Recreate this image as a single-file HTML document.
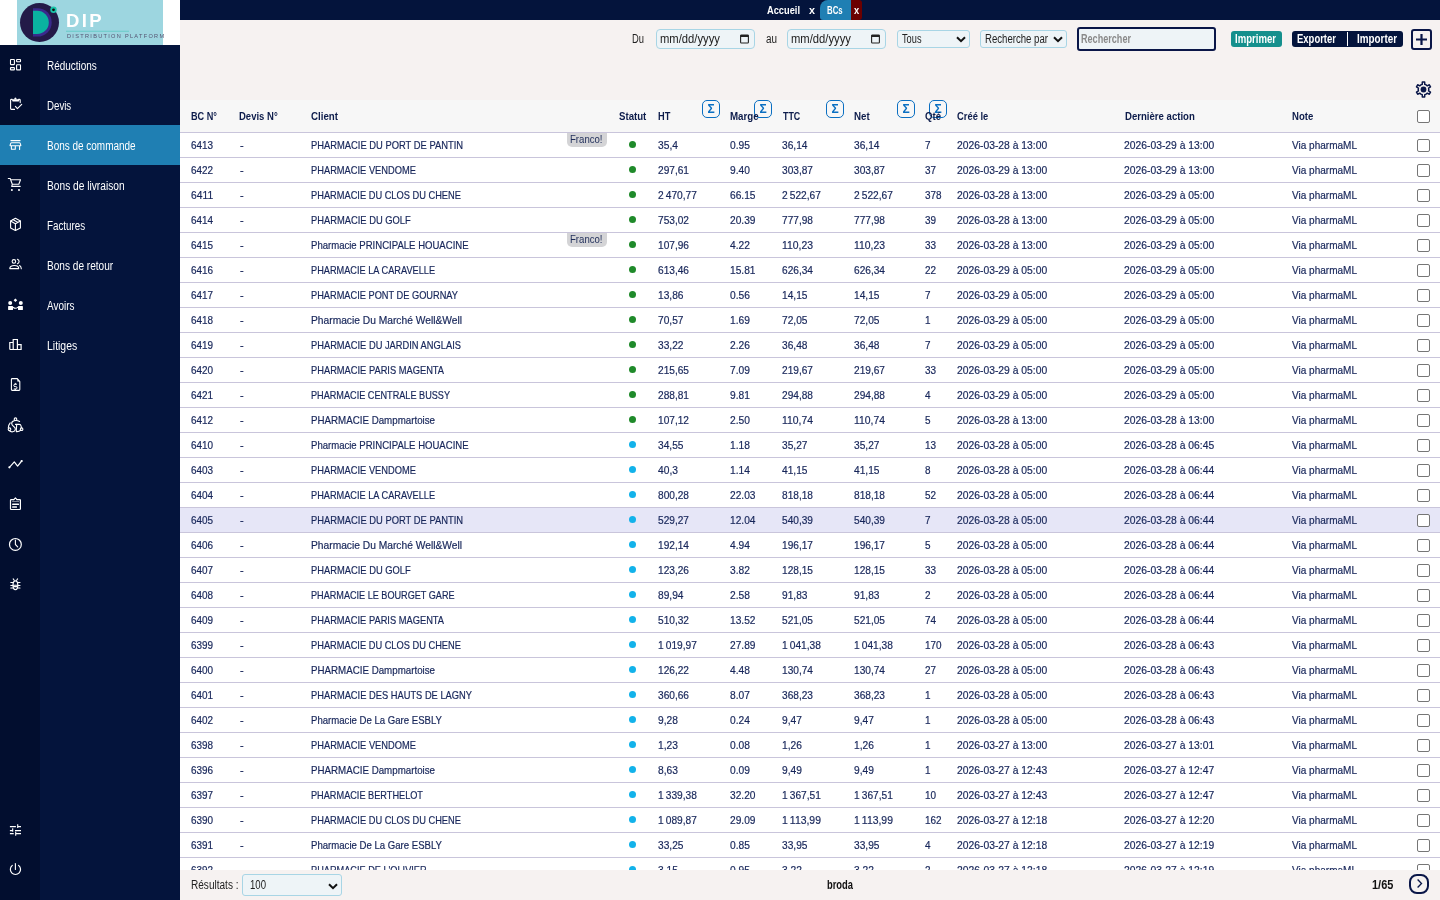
<!DOCTYPE html><html><head><meta charset="utf-8"><style>
*{box-sizing:border-box;margin:0;padding:0}
html,body{width:1440px;height:900px;overflow:hidden;background:#f6f2f1;font-family:"Liberation Sans",sans-serif;}
#wrap{position:absolute;left:0;top:0;width:1440px;height:900px;overflow:hidden;will-change:transform;background:#f6f2f1}
.t{display:inline-block;transform-origin:0 50%;white-space:nowrap}
#side{position:absolute;left:0;top:0;width:180px;height:900px;background:#04143c;}
#side .icol{position:absolute;left:0;top:45px;width:40px;height:855px;background:#020e2f}
#logo{position:absolute;left:0;top:0;width:180px;height:45px;background:#fff}
#logo .bx{position:absolute;left:17px;top:0;width:146px;height:45px;background:#9dd6e0}
.si{position:absolute;left:0;width:180px;height:40px}
.si.act{background:#1f7fb3}
.si .ic{position:absolute;left:0;top:0;width:32px;height:40px;display:flex;align-items:center;justify-content:center}
.si .ic svg{display:block}
.si .lb{position:absolute;left:47px;top:1px;line-height:40px;font-size:12px;color:#fff}
#top{position:absolute;left:180px;top:0;width:1260px;height:20px;background:#04143c}
.tab{position:absolute;top:0;height:20px;line-height:20px;font-size:11px;font-weight:bold;color:#fff}
#main{position:absolute;left:180px;top:20px;width:1260px;height:850px;background:#f6f2f1}
.lbl{position:absolute;font-size:12px;color:#222;line-height:20px}
.date{position:absolute;top:29px;height:20px;width:99px;border:1px solid #a8d5e5;border-radius:4px;background:#eef4f7;font-size:12px;color:#222;line-height:18px;padding-left:4px}
.sel{position:absolute;top:30px;height:18px;border:1px solid #a8d5e5;border-radius:3px;background:#eef4f7;font-size:12px;color:#222;line-height:17px;padding-left:4px}
.btn{position:absolute;top:31px;height:16px;border-radius:3px;color:#fff;font-size:12px;font-weight:bold;line-height:16px}
#thead{position:absolute;left:180px;top:100px;width:1260px;height:33px;background:#f7f7f7;border-bottom:1px solid #c9c5db}
.h{position:absolute;top:0;line-height:33px;font-size:11px;font-weight:bold;color:#0d1c4b}
.sig{position:absolute;top:0;width:18px;height:18px;border:1px solid #0a6fc2;border-radius:5px;color:#0a6fc2;font-size:12px;font-weight:bold;text-align:center;line-height:17px}
#tbody{position:absolute;left:180px;top:133px;width:1260px;height:737px;overflow:hidden}
.row{position:absolute;left:0;width:1260px;height:25px;background:#fff;border-bottom:1px solid #c9c5db}
.row.hl{background:#e6e6f7}
.row .c{position:absolute;top:0;line-height:24px;font-size:11px;color:#17265a;white-space:nowrap;-webkit-text-stroke:0.2px #17265a}
.franco{position:absolute;left:387px;top:0;width:40px;height:14px;background:#d4d4d6;border-radius:0 0 5px 5px;font-size:11px;line-height:13px;color:#1e2c59;padding-left:3px}
.dot{position:absolute;left:448.5px;top:7.5px;width:7.5px;height:7.5px;border-radius:50%}
.dot.g{background:#1f8a2a}.dot.b{background:#12b2ea}
.cb{position:absolute;left:1237px;top:6px;width:13px;height:13px;border:1px solid #767676;border-radius:2px;background:#fff}
#foot{position:absolute;left:180px;top:870px;width:1260px;height:30px;background:#f6f2f1}
</style></head><body><div id="wrap">
<div id="main"></div>

<div class="lbl" style="left:632px;top:29px"><span class="t" style="transform:scaleX(0.782);">Du</span></div>
<div class="date" style="left:656px"><span style="margin-left:-1px"><span class="t" style="transform:scaleX(0.937);">mm/dd/yyyy</span></span><svg style="position:absolute;left:83px;top:4px" width="10" height="10" viewBox="0 0 10 10"><rect x="0.6" y="1" width="7.8" height="8" rx="0.8" fill="none" stroke="#222" stroke-width="1.1"/><rect x="0.6" y="1" width="7.8" height="2" fill="#222"/></svg></div>
<div class="lbl" style="left:765.5px;top:29px"><span class="t" style="transform:scaleX(0.824);">au</span></div>
<div class="date" style="left:787px"><span style="margin-left:-1px"><span class="t" style="transform:scaleX(0.937);">mm/dd/yyyy</span></span><svg style="position:absolute;left:83px;top:4px" width="10" height="10" viewBox="0 0 10 10"><rect x="0.6" y="1" width="7.8" height="8" rx="0.8" fill="none" stroke="#222" stroke-width="1.1"/><rect x="0.6" y="1" width="7.8" height="2" fill="#222"/></svg></div>
<div class="sel" style="left:897px;width:73px"><span class="t" style="transform:scaleX(0.769);">Tous</span><svg style="position:absolute;left:58px;top:5px" width="10" height="7" viewBox="0 0 10 7"><path d="M1 1.2l4 4 4-4" fill="none" stroke="#111" stroke-width="2"/></svg></div>
<div class="sel" style="left:980px;width:87px"><span class="t" style="transform:scaleX(0.800);">Recherche par</span><svg style="position:absolute;left:72px;top:5px" width="10" height="7" viewBox="0 0 10 7"><path d="M1 1.2l4 4 4-4" fill="none" stroke="#111" stroke-width="2"/></svg></div>
<div style="position:absolute;left:1077px;top:27px;width:139px;height:24px;border:2px solid #0a1648;border-radius:3px;background:#eef4f7;font-size:12px;color:#8a8a8a;line-height:20px;padding-left:2px;font-weight:bold"><span class="t" style="transform:scaleX(0.757);">Rechercher</span></div>
<div class="btn" style="left:1231px;width:51px;background:#15908d;padding-left:4px"><span class="t" style="transform:scaleX(0.798);">Imprimer</span></div>
<div class="btn" style="left:1292px;width:111px;background:#04143c">
  <div style="position:absolute;left:5px;top:0"><span class="t" style="transform:scaleX(0.790);">Exporter</span></div>
  <div style="position:absolute;left:55px;top:1px;width:1px;height:14px;background:#fff"></div>
  <div style="position:absolute;left:65px;top:0"><span class="t" style="transform:scaleX(0.822);">Importer</span></div>
</div>
<div style="position:absolute;left:1411px;top:29px;width:21px;height:21px;border:2px solid #0a1648;border-radius:3px;background:#f6f2f1"><svg style="position:absolute;left:1px;top:1px" width="15" height="15" viewBox="0 0 15 15"><path d="M7.5 2v11M2 7.5h11" stroke="#0a1648" stroke-width="2.2"/></svg></div>
<svg style="position:absolute;left:1415px;top:81px" width="17" height="17" viewBox="0 0 17 17"><path d="M5.85 3.91 L7.22 3.36 L7.33 1.09 L9.67 1.09 L9.78 3.36 L11.15 3.91 L12.31 4.82 L14.33 3.78 L15.50 5.81 L13.59 7.04 L13.80 8.50 L13.59 9.96 L15.50 11.19 L14.33 13.22 L12.31 12.18 L11.15 13.09 L9.78 13.64 L9.67 15.91 L7.33 15.91 L7.22 13.64 L5.85 13.09 L4.69 12.18 L2.67 13.22 L1.50 11.19 L3.41 9.96 L3.20 8.50 L3.41 7.04 L1.50 5.81 L2.67 3.78 L4.69 4.82Z" fill="none" stroke="#0a1648" stroke-width="1.5" stroke-linejoin="round"/><circle cx="8.5" cy="8.5" r="2.9" fill="#0a1648"/></svg>

<div id="thead"><div class="sig" style="left:522px">Σ</div><div class="sig" style="left:574px">Σ</div><div class="sig" style="left:646px">Σ</div><div class="sig" style="left:717px">Σ</div><div class="sig" style="left:749px">Σ</div><div class="h" style="left:11px"><span class="t" style="transform:scaleX(0.831);">BC N°</span></div><div class="h" style="left:59px"><span class="t" style="transform:scaleX(0.865);">Devis N°</span></div><div class="h" style="left:131px"><span class="t" style="transform:scaleX(0.884);">Client</span></div><div class="h" style="left:439px"><span class="t" style="transform:scaleX(0.876);">Statut</span></div><div class="h" style="left:478px"><span class="t" style="transform:scaleX(0.839);">HT</span></div><div class="h" style="left:550px"><span class="t" style="transform:scaleX(0.886);">Marge</span></div><div class="h" style="left:603px"><span class="t" style="transform:scaleX(0.809);">TTC</span></div><div class="h" style="left:674px"><span class="t" style="transform:scaleX(0.886);">Net</span></div><div class="h" style="left:745px"><span class="t" style="transform:scaleX(0.873);">Qté</span></div><div class="h" style="left:777px"><span class="t" style="transform:scaleX(0.853);">Créé le</span></div><div class="h" style="left:944.5px"><span class="t" style="transform:scaleX(0.872);">Dernière action</span></div><div class="h" style="left:1112px"><span class="t" style="transform:scaleX(0.871);">Note</span></div><div class="cb" style="left:1237px;top:10px"></div></div>
<div id="tbody"><div class="row" style="top:0px"><div class="c" style="left:11px"><span class="t" style="transform:scaleX(0.903);">6413</span></div><div class="c" style="left:60px">-</div><div class="c" style="left:131px"><span class="t" style="transform:scaleX(0.852);">PHARMACIE DU PORT DE PANTIN</span></div><div class="franco"><span class="t" style="transform:scaleX(0.872);">Franco!</span></div><div class="dot g"></div><div class="c" style="left:478px"><span class="t" style="transform:scaleX(0.931);">35,4</span></div><div class="c" style="left:550px"><span class="t" style="transform:scaleX(0.931);">0.95</span></div><div class="c" style="left:602px"><span class="t" style="transform:scaleX(0.925);">36,14</span></div><div class="c" style="left:674px"><span class="t" style="transform:scaleX(0.925);">36,14</span></div><div class="c" style="left:745px"><span class="t" style="transform:scaleX(0.903);">7</span></div><div class="c" style="left:777px"><span class="t" style="transform:scaleX(0.939);">2026-03-28 à 13:00</span></div><div class="c" style="left:944px"><span class="t" style="transform:scaleX(0.939);">2026-03-29 à 13:00</span></div><div class="c" style="left:1112px"><span class="t" style="transform:scaleX(0.911);">Via pharmaML</span></div><div class="cb"></div></div><div class="row" style="top:25px"><div class="c" style="left:11px"><span class="t" style="transform:scaleX(0.903);">6422</span></div><div class="c" style="left:60px">-</div><div class="c" style="left:131px"><span class="t" style="transform:scaleX(0.846);">PHARMACIE VENDOME</span></div><div class="dot g"></div><div class="c" style="left:478px"><span class="t" style="transform:scaleX(0.921);">297,61</span></div><div class="c" style="left:550px"><span class="t" style="transform:scaleX(0.931);">9.40</span></div><div class="c" style="left:602px"><span class="t" style="transform:scaleX(0.921);">303,87</span></div><div class="c" style="left:674px"><span class="t" style="transform:scaleX(0.921);">303,87</span></div><div class="c" style="left:745px"><span class="t" style="transform:scaleX(0.903);">37</span></div><div class="c" style="left:777px"><span class="t" style="transform:scaleX(0.939);">2026-03-29 à 13:00</span></div><div class="c" style="left:944px"><span class="t" style="transform:scaleX(0.939);">2026-03-29 à 13:00</span></div><div class="c" style="left:1112px"><span class="t" style="transform:scaleX(0.911);">Via pharmaML</span></div><div class="cb"></div></div><div class="row" style="top:50px"><div class="c" style="left:11px"><span class="t" style="transform:scaleX(0.934);">6411</span></div><div class="c" style="left:60px">-</div><div class="c" style="left:131px"><span class="t" style="transform:scaleX(0.843);">PHARMACIE DU CLOS DU CHENE</span></div><div class="dot g"></div><div class="c" style="left:478px"><span class="t" style="transform:scaleX(0.927);">2 470,77</span></div><div class="c" style="left:550px"><span class="t" style="transform:scaleX(0.925);">66.15</span></div><div class="c" style="left:602px"><span class="t" style="transform:scaleX(0.927);">2 522,67</span></div><div class="c" style="left:674px"><span class="t" style="transform:scaleX(0.927);">2 522,67</span></div><div class="c" style="left:745px"><span class="t" style="transform:scaleX(0.903);">378</span></div><div class="c" style="left:777px"><span class="t" style="transform:scaleX(0.939);">2026-03-28 à 13:00</span></div><div class="c" style="left:944px"><span class="t" style="transform:scaleX(0.939);">2026-03-29 à 05:00</span></div><div class="c" style="left:1112px"><span class="t" style="transform:scaleX(0.911);">Via pharmaML</span></div><div class="cb"></div></div><div class="row" style="top:75px"><div class="c" style="left:11px"><span class="t" style="transform:scaleX(0.903);">6414</span></div><div class="c" style="left:60px">-</div><div class="c" style="left:131px"><span class="t" style="transform:scaleX(0.850);">PHARMACIE DU GOLF</span></div><div class="dot g"></div><div class="c" style="left:478px"><span class="t" style="transform:scaleX(0.921);">753,02</span></div><div class="c" style="left:550px"><span class="t" style="transform:scaleX(0.925);">20.39</span></div><div class="c" style="left:602px"><span class="t" style="transform:scaleX(0.921);">777,98</span></div><div class="c" style="left:674px"><span class="t" style="transform:scaleX(0.921);">777,98</span></div><div class="c" style="left:745px"><span class="t" style="transform:scaleX(0.903);">39</span></div><div class="c" style="left:777px"><span class="t" style="transform:scaleX(0.939);">2026-03-28 à 13:00</span></div><div class="c" style="left:944px"><span class="t" style="transform:scaleX(0.939);">2026-03-29 à 05:00</span></div><div class="c" style="left:1112px"><span class="t" style="transform:scaleX(0.911);">Via pharmaML</span></div><div class="cb"></div></div><div class="row" style="top:100px"><div class="c" style="left:11px"><span class="t" style="transform:scaleX(0.903);">6415</span></div><div class="c" style="left:60px">-</div><div class="c" style="left:131px"><span class="t" style="transform:scaleX(0.869);">Pharmacie PRINCIPALE HOUACINE</span></div><div class="franco"><span class="t" style="transform:scaleX(0.872);">Franco!</span></div><div class="dot g"></div><div class="c" style="left:478px"><span class="t" style="transform:scaleX(0.921);">107,96</span></div><div class="c" style="left:550px"><span class="t" style="transform:scaleX(0.931);">4.22</span></div><div class="c" style="left:602px"><span class="t" style="transform:scaleX(0.944);">110,23</span></div><div class="c" style="left:674px"><span class="t" style="transform:scaleX(0.944);">110,23</span></div><div class="c" style="left:745px"><span class="t" style="transform:scaleX(0.903);">33</span></div><div class="c" style="left:777px"><span class="t" style="transform:scaleX(0.939);">2026-03-28 à 13:00</span></div><div class="c" style="left:944px"><span class="t" style="transform:scaleX(0.939);">2026-03-29 à 05:00</span></div><div class="c" style="left:1112px"><span class="t" style="transform:scaleX(0.911);">Via pharmaML</span></div><div class="cb"></div></div><div class="row" style="top:125px"><div class="c" style="left:11px"><span class="t" style="transform:scaleX(0.903);">6416</span></div><div class="c" style="left:60px">-</div><div class="c" style="left:131px"><span class="t" style="transform:scaleX(0.836);">PHARMACIE LA CARAVELLE</span></div><div class="dot g"></div><div class="c" style="left:478px"><span class="t" style="transform:scaleX(0.921);">613,46</span></div><div class="c" style="left:550px"><span class="t" style="transform:scaleX(0.925);">15.81</span></div><div class="c" style="left:602px"><span class="t" style="transform:scaleX(0.921);">626,34</span></div><div class="c" style="left:674px"><span class="t" style="transform:scaleX(0.921);">626,34</span></div><div class="c" style="left:745px"><span class="t" style="transform:scaleX(0.903);">22</span></div><div class="c" style="left:777px"><span class="t" style="transform:scaleX(0.939);">2026-03-29 à 05:00</span></div><div class="c" style="left:944px"><span class="t" style="transform:scaleX(0.939);">2026-03-29 à 05:00</span></div><div class="c" style="left:1112px"><span class="t" style="transform:scaleX(0.911);">Via pharmaML</span></div><div class="cb"></div></div><div class="row" style="top:150px"><div class="c" style="left:11px"><span class="t" style="transform:scaleX(0.903);">6417</span></div><div class="c" style="left:60px">-</div><div class="c" style="left:131px"><span class="t" style="transform:scaleX(0.840);">PHARMACIE PONT DE GOURNAY</span></div><div class="dot g"></div><div class="c" style="left:478px"><span class="t" style="transform:scaleX(0.925);">13,86</span></div><div class="c" style="left:550px"><span class="t" style="transform:scaleX(0.931);">0.56</span></div><div class="c" style="left:602px"><span class="t" style="transform:scaleX(0.925);">14,15</span></div><div class="c" style="left:674px"><span class="t" style="transform:scaleX(0.925);">14,15</span></div><div class="c" style="left:745px"><span class="t" style="transform:scaleX(0.903);">7</span></div><div class="c" style="left:777px"><span class="t" style="transform:scaleX(0.939);">2026-03-29 à 05:00</span></div><div class="c" style="left:944px"><span class="t" style="transform:scaleX(0.939);">2026-03-29 à 05:00</span></div><div class="c" style="left:1112px"><span class="t" style="transform:scaleX(0.911);">Via pharmaML</span></div><div class="cb"></div></div><div class="row" style="top:175px"><div class="c" style="left:11px"><span class="t" style="transform:scaleX(0.903);">6418</span></div><div class="c" style="left:60px">-</div><div class="c" style="left:131px"><span class="t" style="transform:scaleX(0.931);">Pharmacie Du Marché Well&amp;Well</span></div><div class="dot g"></div><div class="c" style="left:478px"><span class="t" style="transform:scaleX(0.925);">70,57</span></div><div class="c" style="left:550px"><span class="t" style="transform:scaleX(0.931);">1.69</span></div><div class="c" style="left:602px"><span class="t" style="transform:scaleX(0.925);">72,05</span></div><div class="c" style="left:674px"><span class="t" style="transform:scaleX(0.925);">72,05</span></div><div class="c" style="left:745px"><span class="t" style="transform:scaleX(0.903);">1</span></div><div class="c" style="left:777px"><span class="t" style="transform:scaleX(0.939);">2026-03-29 à 05:00</span></div><div class="c" style="left:944px"><span class="t" style="transform:scaleX(0.939);">2026-03-29 à 05:00</span></div><div class="c" style="left:1112px"><span class="t" style="transform:scaleX(0.911);">Via pharmaML</span></div><div class="cb"></div></div><div class="row" style="top:200px"><div class="c" style="left:11px"><span class="t" style="transform:scaleX(0.903);">6419</span></div><div class="c" style="left:60px">-</div><div class="c" style="left:131px"><span class="t" style="transform:scaleX(0.846);">PHARMACIE DU JARDIN ANGLAIS</span></div><div class="dot g"></div><div class="c" style="left:478px"><span class="t" style="transform:scaleX(0.925);">33,22</span></div><div class="c" style="left:550px"><span class="t" style="transform:scaleX(0.931);">2.26</span></div><div class="c" style="left:602px"><span class="t" style="transform:scaleX(0.925);">36,48</span></div><div class="c" style="left:674px"><span class="t" style="transform:scaleX(0.925);">36,48</span></div><div class="c" style="left:745px"><span class="t" style="transform:scaleX(0.903);">7</span></div><div class="c" style="left:777px"><span class="t" style="transform:scaleX(0.939);">2026-03-29 à 05:00</span></div><div class="c" style="left:944px"><span class="t" style="transform:scaleX(0.939);">2026-03-29 à 05:00</span></div><div class="c" style="left:1112px"><span class="t" style="transform:scaleX(0.911);">Via pharmaML</span></div><div class="cb"></div></div><div class="row" style="top:225px"><div class="c" style="left:11px"><span class="t" style="transform:scaleX(0.903);">6420</span></div><div class="c" style="left:60px">-</div><div class="c" style="left:131px"><span class="t" style="transform:scaleX(0.846);">PHARMACIE PARIS MAGENTA</span></div><div class="dot g"></div><div class="c" style="left:478px"><span class="t" style="transform:scaleX(0.921);">215,65</span></div><div class="c" style="left:550px"><span class="t" style="transform:scaleX(0.931);">7.09</span></div><div class="c" style="left:602px"><span class="t" style="transform:scaleX(0.921);">219,67</span></div><div class="c" style="left:674px"><span class="t" style="transform:scaleX(0.921);">219,67</span></div><div class="c" style="left:745px"><span class="t" style="transform:scaleX(0.903);">33</span></div><div class="c" style="left:777px"><span class="t" style="transform:scaleX(0.939);">2026-03-29 à 05:00</span></div><div class="c" style="left:944px"><span class="t" style="transform:scaleX(0.939);">2026-03-29 à 05:00</span></div><div class="c" style="left:1112px"><span class="t" style="transform:scaleX(0.911);">Via pharmaML</span></div><div class="cb"></div></div><div class="row" style="top:250px"><div class="c" style="left:11px"><span class="t" style="transform:scaleX(0.903);">6421</span></div><div class="c" style="left:60px">-</div><div class="c" style="left:131px"><span class="t" style="transform:scaleX(0.830);">PHARMACIE CENTRALE BUSSY</span></div><div class="dot g"></div><div class="c" style="left:478px"><span class="t" style="transform:scaleX(0.921);">288,81</span></div><div class="c" style="left:550px"><span class="t" style="transform:scaleX(0.931);">9.81</span></div><div class="c" style="left:602px"><span class="t" style="transform:scaleX(0.921);">294,88</span></div><div class="c" style="left:674px"><span class="t" style="transform:scaleX(0.921);">294,88</span></div><div class="c" style="left:745px"><span class="t" style="transform:scaleX(0.903);">4</span></div><div class="c" style="left:777px"><span class="t" style="transform:scaleX(0.939);">2026-03-29 à 05:00</span></div><div class="c" style="left:944px"><span class="t" style="transform:scaleX(0.939);">2026-03-29 à 05:00</span></div><div class="c" style="left:1112px"><span class="t" style="transform:scaleX(0.911);">Via pharmaML</span></div><div class="cb"></div></div><div class="row" style="top:275px"><div class="c" style="left:11px"><span class="t" style="transform:scaleX(0.903);">6412</span></div><div class="c" style="left:60px">-</div><div class="c" style="left:131px"><span class="t" style="transform:scaleX(0.886);">PHARMACIE Dampmartoise</span></div><div class="dot g"></div><div class="c" style="left:478px"><span class="t" style="transform:scaleX(0.921);">107,12</span></div><div class="c" style="left:550px"><span class="t" style="transform:scaleX(0.931);">2.50</span></div><div class="c" style="left:602px"><span class="t" style="transform:scaleX(0.944);">110,74</span></div><div class="c" style="left:674px"><span class="t" style="transform:scaleX(0.944);">110,74</span></div><div class="c" style="left:745px"><span class="t" style="transform:scaleX(0.903);">5</span></div><div class="c" style="left:777px"><span class="t" style="transform:scaleX(0.939);">2026-03-28 à 13:00</span></div><div class="c" style="left:944px"><span class="t" style="transform:scaleX(0.939);">2026-03-28 à 13:00</span></div><div class="c" style="left:1112px"><span class="t" style="transform:scaleX(0.911);">Via pharmaML</span></div><div class="cb"></div></div><div class="row" style="top:300px"><div class="c" style="left:11px"><span class="t" style="transform:scaleX(0.903);">6410</span></div><div class="c" style="left:60px">-</div><div class="c" style="left:131px"><span class="t" style="transform:scaleX(0.869);">Pharmacie PRINCIPALE HOUACINE</span></div><div class="dot b"></div><div class="c" style="left:478px"><span class="t" style="transform:scaleX(0.925);">34,55</span></div><div class="c" style="left:550px"><span class="t" style="transform:scaleX(0.931);">1.18</span></div><div class="c" style="left:602px"><span class="t" style="transform:scaleX(0.925);">35,27</span></div><div class="c" style="left:674px"><span class="t" style="transform:scaleX(0.925);">35,27</span></div><div class="c" style="left:745px"><span class="t" style="transform:scaleX(0.903);">13</span></div><div class="c" style="left:777px"><span class="t" style="transform:scaleX(0.939);">2026-03-28 à 05:00</span></div><div class="c" style="left:944px"><span class="t" style="transform:scaleX(0.939);">2026-03-28 à 06:45</span></div><div class="c" style="left:1112px"><span class="t" style="transform:scaleX(0.911);">Via pharmaML</span></div><div class="cb"></div></div><div class="row" style="top:325px"><div class="c" style="left:11px"><span class="t" style="transform:scaleX(0.903);">6403</span></div><div class="c" style="left:60px">-</div><div class="c" style="left:131px"><span class="t" style="transform:scaleX(0.846);">PHARMACIE VENDOME</span></div><div class="dot b"></div><div class="c" style="left:478px"><span class="t" style="transform:scaleX(0.931);">40,3</span></div><div class="c" style="left:550px"><span class="t" style="transform:scaleX(0.931);">1.14</span></div><div class="c" style="left:602px"><span class="t" style="transform:scaleX(0.925);">41,15</span></div><div class="c" style="left:674px"><span class="t" style="transform:scaleX(0.925);">41,15</span></div><div class="c" style="left:745px"><span class="t" style="transform:scaleX(0.903);">8</span></div><div class="c" style="left:777px"><span class="t" style="transform:scaleX(0.939);">2026-03-28 à 05:00</span></div><div class="c" style="left:944px"><span class="t" style="transform:scaleX(0.939);">2026-03-28 à 06:44</span></div><div class="c" style="left:1112px"><span class="t" style="transform:scaleX(0.911);">Via pharmaML</span></div><div class="cb"></div></div><div class="row" style="top:350px"><div class="c" style="left:11px"><span class="t" style="transform:scaleX(0.903);">6404</span></div><div class="c" style="left:60px">-</div><div class="c" style="left:131px"><span class="t" style="transform:scaleX(0.836);">PHARMACIE LA CARAVELLE</span></div><div class="dot b"></div><div class="c" style="left:478px"><span class="t" style="transform:scaleX(0.921);">800,28</span></div><div class="c" style="left:550px"><span class="t" style="transform:scaleX(0.925);">22.03</span></div><div class="c" style="left:602px"><span class="t" style="transform:scaleX(0.921);">818,18</span></div><div class="c" style="left:674px"><span class="t" style="transform:scaleX(0.921);">818,18</span></div><div class="c" style="left:745px"><span class="t" style="transform:scaleX(0.903);">52</span></div><div class="c" style="left:777px"><span class="t" style="transform:scaleX(0.939);">2026-03-28 à 05:00</span></div><div class="c" style="left:944px"><span class="t" style="transform:scaleX(0.939);">2026-03-28 à 06:44</span></div><div class="c" style="left:1112px"><span class="t" style="transform:scaleX(0.911);">Via pharmaML</span></div><div class="cb"></div></div><div class="row hl" style="top:375px"><div class="c" style="left:11px"><span class="t" style="transform:scaleX(0.903);">6405</span></div><div class="c" style="left:60px">-</div><div class="c" style="left:131px"><span class="t" style="transform:scaleX(0.852);">PHARMACIE DU PORT DE PANTIN</span></div><div class="dot b"></div><div class="c" style="left:478px"><span class="t" style="transform:scaleX(0.921);">529,27</span></div><div class="c" style="left:550px"><span class="t" style="transform:scaleX(0.925);">12.04</span></div><div class="c" style="left:602px"><span class="t" style="transform:scaleX(0.921);">540,39</span></div><div class="c" style="left:674px"><span class="t" style="transform:scaleX(0.921);">540,39</span></div><div class="c" style="left:745px"><span class="t" style="transform:scaleX(0.903);">7</span></div><div class="c" style="left:777px"><span class="t" style="transform:scaleX(0.939);">2026-03-28 à 05:00</span></div><div class="c" style="left:944px"><span class="t" style="transform:scaleX(0.939);">2026-03-28 à 06:44</span></div><div class="c" style="left:1112px"><span class="t" style="transform:scaleX(0.911);">Via pharmaML</span></div><div class="cb"></div></div><div class="row" style="top:400px"><div class="c" style="left:11px"><span class="t" style="transform:scaleX(0.903);">6406</span></div><div class="c" style="left:60px">-</div><div class="c" style="left:131px"><span class="t" style="transform:scaleX(0.931);">Pharmacie Du Marché Well&amp;Well</span></div><div class="dot b"></div><div class="c" style="left:478px"><span class="t" style="transform:scaleX(0.921);">192,14</span></div><div class="c" style="left:550px"><span class="t" style="transform:scaleX(0.931);">4.94</span></div><div class="c" style="left:602px"><span class="t" style="transform:scaleX(0.921);">196,17</span></div><div class="c" style="left:674px"><span class="t" style="transform:scaleX(0.921);">196,17</span></div><div class="c" style="left:745px"><span class="t" style="transform:scaleX(0.903);">5</span></div><div class="c" style="left:777px"><span class="t" style="transform:scaleX(0.939);">2026-03-28 à 05:00</span></div><div class="c" style="left:944px"><span class="t" style="transform:scaleX(0.939);">2026-03-28 à 06:44</span></div><div class="c" style="left:1112px"><span class="t" style="transform:scaleX(0.911);">Via pharmaML</span></div><div class="cb"></div></div><div class="row" style="top:425px"><div class="c" style="left:11px"><span class="t" style="transform:scaleX(0.903);">6407</span></div><div class="c" style="left:60px">-</div><div class="c" style="left:131px"><span class="t" style="transform:scaleX(0.850);">PHARMACIE DU GOLF</span></div><div class="dot b"></div><div class="c" style="left:478px"><span class="t" style="transform:scaleX(0.921);">123,26</span></div><div class="c" style="left:550px"><span class="t" style="transform:scaleX(0.931);">3.82</span></div><div class="c" style="left:602px"><span class="t" style="transform:scaleX(0.921);">128,15</span></div><div class="c" style="left:674px"><span class="t" style="transform:scaleX(0.921);">128,15</span></div><div class="c" style="left:745px"><span class="t" style="transform:scaleX(0.903);">33</span></div><div class="c" style="left:777px"><span class="t" style="transform:scaleX(0.939);">2026-03-28 à 05:00</span></div><div class="c" style="left:944px"><span class="t" style="transform:scaleX(0.939);">2026-03-28 à 06:44</span></div><div class="c" style="left:1112px"><span class="t" style="transform:scaleX(0.911);">Via pharmaML</span></div><div class="cb"></div></div><div class="row" style="top:450px"><div class="c" style="left:11px"><span class="t" style="transform:scaleX(0.903);">6408</span></div><div class="c" style="left:60px">-</div><div class="c" style="left:131px"><span class="t" style="transform:scaleX(0.828);">PHARMACIE LE BOURGET GARE</span></div><div class="dot b"></div><div class="c" style="left:478px"><span class="t" style="transform:scaleX(0.925);">89,94</span></div><div class="c" style="left:550px"><span class="t" style="transform:scaleX(0.931);">2.58</span></div><div class="c" style="left:602px"><span class="t" style="transform:scaleX(0.925);">91,83</span></div><div class="c" style="left:674px"><span class="t" style="transform:scaleX(0.925);">91,83</span></div><div class="c" style="left:745px"><span class="t" style="transform:scaleX(0.903);">2</span></div><div class="c" style="left:777px"><span class="t" style="transform:scaleX(0.939);">2026-03-28 à 05:00</span></div><div class="c" style="left:944px"><span class="t" style="transform:scaleX(0.939);">2026-03-28 à 06:44</span></div><div class="c" style="left:1112px"><span class="t" style="transform:scaleX(0.911);">Via pharmaML</span></div><div class="cb"></div></div><div class="row" style="top:475px"><div class="c" style="left:11px"><span class="t" style="transform:scaleX(0.903);">6409</span></div><div class="c" style="left:60px">-</div><div class="c" style="left:131px"><span class="t" style="transform:scaleX(0.846);">PHARMACIE PARIS MAGENTA</span></div><div class="dot b"></div><div class="c" style="left:478px"><span class="t" style="transform:scaleX(0.921);">510,32</span></div><div class="c" style="left:550px"><span class="t" style="transform:scaleX(0.925);">13.52</span></div><div class="c" style="left:602px"><span class="t" style="transform:scaleX(0.921);">521,05</span></div><div class="c" style="left:674px"><span class="t" style="transform:scaleX(0.921);">521,05</span></div><div class="c" style="left:745px"><span class="t" style="transform:scaleX(0.903);">74</span></div><div class="c" style="left:777px"><span class="t" style="transform:scaleX(0.939);">2026-03-28 à 05:00</span></div><div class="c" style="left:944px"><span class="t" style="transform:scaleX(0.939);">2026-03-28 à 06:44</span></div><div class="c" style="left:1112px"><span class="t" style="transform:scaleX(0.911);">Via pharmaML</span></div><div class="cb"></div></div><div class="row" style="top:500px"><div class="c" style="left:11px"><span class="t" style="transform:scaleX(0.903);">6399</span></div><div class="c" style="left:60px">-</div><div class="c" style="left:131px"><span class="t" style="transform:scaleX(0.843);">PHARMACIE DU CLOS DU CHENE</span></div><div class="dot b"></div><div class="c" style="left:478px"><span class="t" style="transform:scaleX(0.927);">1 019,97</span></div><div class="c" style="left:550px"><span class="t" style="transform:scaleX(0.925);">27.89</span></div><div class="c" style="left:602px"><span class="t" style="transform:scaleX(0.927);">1 041,38</span></div><div class="c" style="left:674px"><span class="t" style="transform:scaleX(0.927);">1 041,38</span></div><div class="c" style="left:745px"><span class="t" style="transform:scaleX(0.903);">170</span></div><div class="c" style="left:777px"><span class="t" style="transform:scaleX(0.939);">2026-03-28 à 05:00</span></div><div class="c" style="left:944px"><span class="t" style="transform:scaleX(0.939);">2026-03-28 à 06:43</span></div><div class="c" style="left:1112px"><span class="t" style="transform:scaleX(0.911);">Via pharmaML</span></div><div class="cb"></div></div><div class="row" style="top:525px"><div class="c" style="left:11px"><span class="t" style="transform:scaleX(0.903);">6400</span></div><div class="c" style="left:60px">-</div><div class="c" style="left:131px"><span class="t" style="transform:scaleX(0.886);">PHARMACIE Dampmartoise</span></div><div class="dot b"></div><div class="c" style="left:478px"><span class="t" style="transform:scaleX(0.921);">126,22</span></div><div class="c" style="left:550px"><span class="t" style="transform:scaleX(0.931);">4.48</span></div><div class="c" style="left:602px"><span class="t" style="transform:scaleX(0.921);">130,74</span></div><div class="c" style="left:674px"><span class="t" style="transform:scaleX(0.921);">130,74</span></div><div class="c" style="left:745px"><span class="t" style="transform:scaleX(0.903);">27</span></div><div class="c" style="left:777px"><span class="t" style="transform:scaleX(0.939);">2026-03-28 à 05:00</span></div><div class="c" style="left:944px"><span class="t" style="transform:scaleX(0.939);">2026-03-28 à 06:43</span></div><div class="c" style="left:1112px"><span class="t" style="transform:scaleX(0.911);">Via pharmaML</span></div><div class="cb"></div></div><div class="row" style="top:550px"><div class="c" style="left:11px"><span class="t" style="transform:scaleX(0.903);">6401</span></div><div class="c" style="left:60px">-</div><div class="c" style="left:131px"><span class="t" style="transform:scaleX(0.847);">PHARMACIE DES HAUTS DE LAGNY</span></div><div class="dot b"></div><div class="c" style="left:478px"><span class="t" style="transform:scaleX(0.921);">360,66</span></div><div class="c" style="left:550px"><span class="t" style="transform:scaleX(0.931);">8.07</span></div><div class="c" style="left:602px"><span class="t" style="transform:scaleX(0.921);">368,23</span></div><div class="c" style="left:674px"><span class="t" style="transform:scaleX(0.921);">368,23</span></div><div class="c" style="left:745px"><span class="t" style="transform:scaleX(0.903);">1</span></div><div class="c" style="left:777px"><span class="t" style="transform:scaleX(0.939);">2026-03-28 à 05:00</span></div><div class="c" style="left:944px"><span class="t" style="transform:scaleX(0.939);">2026-03-28 à 06:43</span></div><div class="c" style="left:1112px"><span class="t" style="transform:scaleX(0.911);">Via pharmaML</span></div><div class="cb"></div></div><div class="row" style="top:575px"><div class="c" style="left:11px"><span class="t" style="transform:scaleX(0.903);">6402</span></div><div class="c" style="left:60px">-</div><div class="c" style="left:131px"><span class="t" style="transform:scaleX(0.872);">Pharmacie De La Gare ESBLY</span></div><div class="dot b"></div><div class="c" style="left:478px"><span class="t" style="transform:scaleX(0.931);">9,28</span></div><div class="c" style="left:550px"><span class="t" style="transform:scaleX(0.931);">0.24</span></div><div class="c" style="left:602px"><span class="t" style="transform:scaleX(0.931);">9,47</span></div><div class="c" style="left:674px"><span class="t" style="transform:scaleX(0.931);">9,47</span></div><div class="c" style="left:745px"><span class="t" style="transform:scaleX(0.903);">1</span></div><div class="c" style="left:777px"><span class="t" style="transform:scaleX(0.939);">2026-03-28 à 05:00</span></div><div class="c" style="left:944px"><span class="t" style="transform:scaleX(0.939);">2026-03-28 à 06:43</span></div><div class="c" style="left:1112px"><span class="t" style="transform:scaleX(0.911);">Via pharmaML</span></div><div class="cb"></div></div><div class="row" style="top:600px"><div class="c" style="left:11px"><span class="t" style="transform:scaleX(0.903);">6398</span></div><div class="c" style="left:60px">-</div><div class="c" style="left:131px"><span class="t" style="transform:scaleX(0.846);">PHARMACIE VENDOME</span></div><div class="dot b"></div><div class="c" style="left:478px"><span class="t" style="transform:scaleX(0.931);">1,23</span></div><div class="c" style="left:550px"><span class="t" style="transform:scaleX(0.931);">0.08</span></div><div class="c" style="left:602px"><span class="t" style="transform:scaleX(0.931);">1,26</span></div><div class="c" style="left:674px"><span class="t" style="transform:scaleX(0.931);">1,26</span></div><div class="c" style="left:745px"><span class="t" style="transform:scaleX(0.903);">1</span></div><div class="c" style="left:777px"><span class="t" style="transform:scaleX(0.939);">2026-03-27 à 13:00</span></div><div class="c" style="left:944px"><span class="t" style="transform:scaleX(0.939);">2026-03-27 à 13:01</span></div><div class="c" style="left:1112px"><span class="t" style="transform:scaleX(0.911);">Via pharmaML</span></div><div class="cb"></div></div><div class="row" style="top:625px"><div class="c" style="left:11px"><span class="t" style="transform:scaleX(0.903);">6396</span></div><div class="c" style="left:60px">-</div><div class="c" style="left:131px"><span class="t" style="transform:scaleX(0.886);">PHARMACIE Dampmartoise</span></div><div class="dot b"></div><div class="c" style="left:478px"><span class="t" style="transform:scaleX(0.931);">8,63</span></div><div class="c" style="left:550px"><span class="t" style="transform:scaleX(0.931);">0.09</span></div><div class="c" style="left:602px"><span class="t" style="transform:scaleX(0.931);">9,49</span></div><div class="c" style="left:674px"><span class="t" style="transform:scaleX(0.931);">9,49</span></div><div class="c" style="left:745px"><span class="t" style="transform:scaleX(0.903);">1</span></div><div class="c" style="left:777px"><span class="t" style="transform:scaleX(0.939);">2026-03-27 à 12:43</span></div><div class="c" style="left:944px"><span class="t" style="transform:scaleX(0.939);">2026-03-27 à 12:47</span></div><div class="c" style="left:1112px"><span class="t" style="transform:scaleX(0.911);">Via pharmaML</span></div><div class="cb"></div></div><div class="row" style="top:650px"><div class="c" style="left:11px"><span class="t" style="transform:scaleX(0.903);">6397</span></div><div class="c" style="left:60px">-</div><div class="c" style="left:131px"><span class="t" style="transform:scaleX(0.834);">PHARMACIE BERTHELOT</span></div><div class="dot b"></div><div class="c" style="left:478px"><span class="t" style="transform:scaleX(0.927);">1 339,38</span></div><div class="c" style="left:550px"><span class="t" style="transform:scaleX(0.925);">32.20</span></div><div class="c" style="left:602px"><span class="t" style="transform:scaleX(0.927);">1 367,51</span></div><div class="c" style="left:674px"><span class="t" style="transform:scaleX(0.927);">1 367,51</span></div><div class="c" style="left:745px"><span class="t" style="transform:scaleX(0.903);">10</span></div><div class="c" style="left:777px"><span class="t" style="transform:scaleX(0.939);">2026-03-27 à 12:43</span></div><div class="c" style="left:944px"><span class="t" style="transform:scaleX(0.939);">2026-03-27 à 12:47</span></div><div class="c" style="left:1112px"><span class="t" style="transform:scaleX(0.911);">Via pharmaML</span></div><div class="cb"></div></div><div class="row" style="top:675px"><div class="c" style="left:11px"><span class="t" style="transform:scaleX(0.903);">6390</span></div><div class="c" style="left:60px">-</div><div class="c" style="left:131px"><span class="t" style="transform:scaleX(0.843);">PHARMACIE DU CLOS DU CHENE</span></div><div class="dot b"></div><div class="c" style="left:478px"><span class="t" style="transform:scaleX(0.927);">1 089,87</span></div><div class="c" style="left:550px"><span class="t" style="transform:scaleX(0.925);">29.09</span></div><div class="c" style="left:602px"><span class="t" style="transform:scaleX(0.946);">1 113,99</span></div><div class="c" style="left:674px"><span class="t" style="transform:scaleX(0.946);">1 113,99</span></div><div class="c" style="left:745px"><span class="t" style="transform:scaleX(0.903);">162</span></div><div class="c" style="left:777px"><span class="t" style="transform:scaleX(0.939);">2026-03-27 à 12:18</span></div><div class="c" style="left:944px"><span class="t" style="transform:scaleX(0.939);">2026-03-27 à 12:20</span></div><div class="c" style="left:1112px"><span class="t" style="transform:scaleX(0.911);">Via pharmaML</span></div><div class="cb"></div></div><div class="row" style="top:700px"><div class="c" style="left:11px"><span class="t" style="transform:scaleX(0.903);">6391</span></div><div class="c" style="left:60px">-</div><div class="c" style="left:131px"><span class="t" style="transform:scaleX(0.872);">Pharmacie De La Gare ESBLY</span></div><div class="dot b"></div><div class="c" style="left:478px"><span class="t" style="transform:scaleX(0.925);">33,25</span></div><div class="c" style="left:550px"><span class="t" style="transform:scaleX(0.931);">0.85</span></div><div class="c" style="left:602px"><span class="t" style="transform:scaleX(0.925);">33,95</span></div><div class="c" style="left:674px"><span class="t" style="transform:scaleX(0.925);">33,95</span></div><div class="c" style="left:745px"><span class="t" style="transform:scaleX(0.903);">4</span></div><div class="c" style="left:777px"><span class="t" style="transform:scaleX(0.939);">2026-03-27 à 12:18</span></div><div class="c" style="left:944px"><span class="t" style="transform:scaleX(0.939);">2026-03-27 à 12:19</span></div><div class="c" style="left:1112px"><span class="t" style="transform:scaleX(0.911);">Via pharmaML</span></div><div class="cb"></div></div><div class="row" style="top:725px"><div class="c" style="left:11px"><span class="t" style="transform:scaleX(0.903);">6392</span></div><div class="c" style="left:60px">-</div><div class="c" style="left:131px"><span class="t" style="transform:scaleX(0.835);">PHARMACIE DE L&#x27;OLIVIER</span></div><div class="dot b"></div><div class="c" style="left:478px"><span class="t" style="transform:scaleX(0.931);">3,15</span></div><div class="c" style="left:550px"><span class="t" style="transform:scaleX(0.931);">0.95</span></div><div class="c" style="left:602px"><span class="t" style="transform:scaleX(0.931);">3,22</span></div><div class="c" style="left:674px"><span class="t" style="transform:scaleX(0.931);">3,22</span></div><div class="c" style="left:745px"><span class="t" style="transform:scaleX(0.903);">2</span></div><div class="c" style="left:777px"><span class="t" style="transform:scaleX(0.939);">2026-03-27 à 12:18</span></div><div class="c" style="left:944px"><span class="t" style="transform:scaleX(0.939);">2026-03-27 à 12:19</span></div><div class="c" style="left:1112px"><span class="t" style="transform:scaleX(0.911);">Via pharmaML</span></div><div class="cb"></div></div></div>
<div id="foot">
<div style="position:absolute;left:10.5px;top:0;line-height:30px;font-size:12px;color:#222"><span class="t" style="transform:scaleX(0.838);">Résultats :</span></div>
<div class="sel" style="left:62px;top:4px;width:100px;height:22px;line-height:21px;padding-left:7px"><span class="t" style="transform:scaleX(0.799);">100</span><svg style="position:absolute;left:85px;top:8px" width="10" height="7" viewBox="0 0 10 7"><path d="M1 1.2l4 4 4-4" fill="none" stroke="#111" stroke-width="2"/></svg></div>
<div style="position:absolute;left:646.5px;top:0;line-height:30px;font-size:12px;color:#111;font-weight:bold"><span class="t" style="transform:scaleX(0.780);">broda</span></div>
<div style="position:absolute;left:1192.2px;top:0;line-height:30px;font-size:12px;color:#111;font-weight:bold"><span class="t" style="transform:scaleX(0.916);">1/65</span></div>
<div style="position:absolute;left:1229px;top:4px;width:20px;height:20px;border:2px solid #0a1648;border-radius:8px"><svg style="position:absolute;left:4px;top:2px" width="9" height="11" viewBox="0 0 9 11"><path d="M2.6 1.6l3.9 3.9-3.9 3.9" fill="none" stroke="#0a1648" stroke-width="1.35"/></svg></div>
</div>
<div id="side"><div id="logo"><div class="bx"></div>
<svg style="position:absolute;left:0;top:0" width="180" height="45" viewBox="0 0 180 45">
<circle cx="39.5" cy="22.5" r="19.5" fill="#231a48"/>
<path d="M33 8.2h4.5a14.2 14.2 0 0 1 0 28.4H33z" fill="#3a2a8c"/>
<path d="M33 10.8h4.2a11.6 11.6 0 0 1 0 23.2H33z" fill="#0ab3a0"/>
<circle cx="53.5" cy="9.8" r="3.2" fill="#18c4a8"/><circle cx="53.5" cy="9.8" r="1.4" fill="#111"/>
<text x="66" y="27.3" font-family="Liberation Sans" font-weight="bold" font-size="18.5" fill="#fff" letter-spacing="2.4">DIP</text>
<rect x="66" y="30.8" width="63" height="0.8" fill="#5cc9c2"/>
<text x="67" y="38.3" font-family="Liberation Sans" font-size="5.6" fill="#555270" letter-spacing="1.3">DISTRIBUTION PLATFORM</text>
</svg></div><div class="icol"></div><div class="si" style="top:45px"><div class="lb"><span class="t" style="transform:scaleX(0.830);">Réductions</span></div></div><div class="si" style="top:85px"><div class="lb"><span class="t" style="transform:scaleX(0.807);">Devis</span></div></div><div class="si act" style="top:125px"><div class="lb"><span class="t" style="transform:scaleX(0.830);">Bons de commande</span></div></div><div class="si" style="top:165px"><div class="lb"><span class="t" style="transform:scaleX(0.849);">Bons de livraison</span></div></div><div class="si" style="top:205px"><div class="lb"><span class="t" style="transform:scaleX(0.816);">Factures</span></div></div><div class="si" style="top:245px"><div class="lb"><span class="t" style="transform:scaleX(0.841);">Bons de retour</span></div></div><div class="si" style="top:285px"><div class="lb"><span class="t" style="transform:scaleX(0.827);">Avoirs</span></div></div><div class="si" style="top:325px"><div class="lb"><span class="t" style="transform:scaleX(0.871);">Litiges</span></div></div><svg style="position:absolute;left:0;top:0" width="40" height="900" viewBox="0 0 40 900">
<g fill="none" stroke="#fff" stroke-width="1.1" stroke-linecap="round" stroke-linejoin="round">
<!-- reduc -->
<rect x="10.5" y="59.5" width="3.9" height="5.1" rx="0.5"/>
<rect x="16.6" y="59.5" width="3.9" height="2.3" rx="0.5"/>
<rect x="10.5" y="67.6" width="3.9" height="2.3" rx="0.5"/>
<rect x="16.6" y="64.7" width="3.9" height="5.2" rx="0.5"/>
<!-- devis -->
<path d="M14.5 109.4H11.4q-.8 0-.8-.8v-8.4q0-.8.8-.8h.8M18.6 99.4h.8q.8 0 .8.8v2.4"/>
<path d="M15.4 106.3l2 2.3 4.3-4.3"/>
<!-- store -->
<path d="M10.9 140.6H20.1" stroke-width="1.1"/>
<path d="M11.6 142.8H19.4q.6 0 .8.6l.6 1.8q.2.6-.5.6H10.6q-.7 0-.5-.6l.6-1.8q.2-.6.9-.6z"/>
<path d="M11.4 146.2V149.3H15.3V146.2M19.6 146.2V149.5"/>
<!-- cart -->
<path d="M8.3 178.5H10.2L12.3 184.3H18.8L20.5 179.7H10.9M12.3 184.3L11.7 186.4H20.2"/>
<!-- box -->
<path d="M15.4 218.3L20.4 221V228L15.4 230.5L10.6 228V221Z"/>
<path d="M10.6 221L15.4 223.8L20.4 221M15.4 223.8V230.3M12.9 219.6L17.9 222.4"/>
<!-- users -->
<circle cx="13.9" cy="261.4" r="1.75"/>
<path d="M17.4 259.3q1.7 .6 1.7 2.2t-1.7 2.2"/>
<path d="M9.8 268.6q0-3.1 4.5-3.1t4.4 3.1z"/>
<path d="M19.6 265.6q1.6 .9 1.7 3.1"/>
<!-- avoirs smile -->
<path d="M13.2 307.3q2.2 2 4.5 0"/>
<!-- litiges -->
<path d="M9.8 349.5V342.5H13.2V349.5M13.2 349.5V339.5H17.4V349.5M17.4 349.5V344.6H21.1V349.5H9.8" stroke-width="1.2" stroke-linejoin="miter" stroke-linecap="butt"/>
<!-- file -->
<path d="M11.4 379.4q0-.8.8-.8H17.3L19.8 381.6V389.6q0 .8-.8.8H12.2q-.8 0-.8-.8z"/>
<path d="M16.6 384.2h-1.6q-1.2 0-1.2 1.2t1.2 1.2h.8q1.2 0 1.2 1.2t-1.2 1.2h-1.6M15.3 383.3v.9M15.3 389v.8" stroke-width="1"/>
<!-- scale / triad -->
<circle cx="15.5" cy="419.2" r="1.3"/>
<circle cx="9.5" cy="429.2" r="1.3"/>
<circle cx="21.6" cy="429.2" r="1.3"/>
<path d="M19.6 421.4q-2.5-1.3-5.5-.6q-2.6 .8-2.4 3q.2 1.7 2.3 3q1.6 1.2 1.3 2.8q-.4 2-2.6 2.2q-2.2 .2-3.6-1.1"/>
<path d="M15.5 424.4h3.7q1.6 0 1.9 1.6l.3 1.9M16.7 424.6q-.3 3.2-.4 7q2.6 .3 4.7-1.6M8.3 427.7q.3-3 1.9-4.8"/>
<!-- trend -->
<path d="M9.4 467.3L14.3 461.9L17.6 466.1L21.7 461" stroke-width="1.2"/>
<!-- clip list -->
<path d="M13.9 499.6h-2.7q-.7 0-.7.7v8.5q0 .7.7.7h8.5q.7 0 .7-.7v-8.5q0-.7-.7-.7h-2.8" stroke-width="1.2"/>
<path d="M13.8 499.6l1.6-1.8l1.6 1.8" stroke-width="1.1"/>
<!-- clock -->
<circle cx="15.4" cy="544.4" r="5.9" stroke-width="1.2"/>
<path d="M15.4 540v4.5l2.3 2.3"/>
<!-- bug -->
<ellipse cx="15.4" cy="585.3" rx="2.4" ry="4.4" stroke-width="1.2"/>
<path d="M10.8 582.5h2M10.8 585.5h2M10.8 588h2M18 582.5h2M18 585.5h2M18 588h2M13.2 578.9l1 1.4M17.6 578.9l-1 1.4M13.6 585.3h3.6M13.6 586.6h3.6" stroke-width="1.1"/>
<!-- sliders -->
<path d="M9.9 826.6H15.9M17.4 826.6H21M17.7 824.3V828M9.9 830.6H12.7M12.7 828.3V831.7M15 830.6H21M9.9 833.6H13.7M15.7 833.6H21M15.7 831.8V835.8" stroke-width="1.1" stroke-linecap="butt"/>
<!-- power -->
<path d="M15.4 863.5V869.5" stroke-width="1.1"/>
<path d="M12.3 865.4A5.1 5.1 0 1 0 18.6 865.4" stroke-width="1.2"/>
</g>
<g fill="#fff">
<path d="M12.2 99.3h7v1.4q0 .8-.8.8h-5.4q-.8 0-.8-.8z"/><path d="M14.2 99.4q0-1.9 1.2-1.9t1.2 1.9z"/>
<circle cx="11.9" cy="189.9" r="1"/><circle cx="19" cy="189.9" r="1"/>
<circle cx="10.2" cy="302.9" r="2"/><circle cx="20.8" cy="302.9" r="2"/>
<rect x="8.1" y="305.9" width="4.9" height="4" rx="0.5"/><rect x="18" y="305.9" width="4.9" height="4" rx="0.5"/>
<path d="M15.4 298.5l1.8 1.8-1.8 1.8-1.8-1.8z"/>
<path d="M17.3 378.6L19.8 381.4H17.3z"/>
<circle cx="9.4" cy="467.3" r="1.1"/><circle cx="21.7" cy="461" r="1.1"/>
<rect x="12.1" y="503.4" width="6.9" height="1.5" rx="0.5"/><rect x="12.1" y="506.3" width="4.9" height="1.5" rx="0.5"/>
<rect x="12.1" y="501" width="6.9" height="0.8" opacity="0.6"/>
</g>
</svg></div>
<div id="top">
<div class="tab" style="left:586.7px"><span class="t" style="transform:scaleX(0.843);">Accueil</span></div>
<div class="tab" style="left:629px"><span class="t" style="transform:scaleX(0.981);">x</span></div>
<div style="position:absolute;left:640px;top:0;width:32px;height:20px;background:#1f7fb3;border-radius:8px 0 0 3px"></div>
<div style="position:absolute;left:671px;top:0;width:11px;height:20px;background:#6b0000;border-radius:0 3px 3px 0"></div>
<div class="tab" style="left:647.3px"><span class="t" style="transform:scaleX(0.709);">BCs</span></div>
<div class="tab" style="left:673.6px"><span class="t" style="transform:scaleX(0.850);">x</span></div>
</div>
</div></body></html>
